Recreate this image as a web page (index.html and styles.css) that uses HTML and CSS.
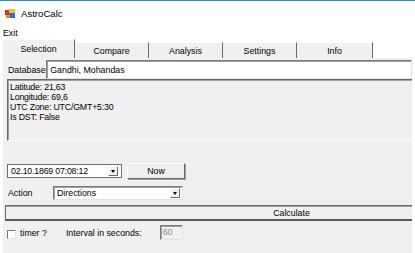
FILE: index.html
```html
<!DOCTYPE html>
<html lang="en">
<head>
    <meta charset="UTF-8">
    <title>AstroCalc</title>
    <link rel="stylesheet" href="styles.css">
</head>
<body>
    <div class="window">
        <div class="titlebar">
            <svg class="app-icon" width="11" height="10" viewBox="0 0 11 10">
                <rect x="0" y="1" width="6" height="5" fill="#d8322b"/>
                <rect x="4" y="0" width="6" height="5" fill="#f2c12e"/>
                <rect x="4" y="4" width="6" height="5" fill="#2f6fd0"/>
                <rect x="1" y="6" width="4" height="3" fill="#e58a2c"/>
            </svg>
            <span class="title">AstroCalc</span>
        </div>

        <div class="menubar">
            <span class="menu-item">Exit</span>
        </div>

        <div class="tabs">
            <div class="tab active">Selection</div>
            <div class="tab">Compare</div>
            <div class="tab">Analysis</div>
            <div class="tab">Settings</div>
            <div class="tab">Info</div>
        </div>

        <div class="tab-page">
            <div class="row db-row">
                <label class="label">Database</label>
                <div class="textbox db-box">Gandhi, Mohandas</div>
            </div>

            <div class="info-box">
                <div>Latitude: 21,63</div>
                <div>Longitude: 69,6</div>
                <div>UTC Zone: UTC/GMT+5:30</div>
                <div>Is DST: False</div>
            </div>

            <div class="row date-row">
                <div class="textbox date-box">
                    <span class="date-text">02.10.1869 07:08:12</span>
                    <span class="drop-btn"></span>
                </div>
                <button class="btn now-btn">Now</button>
            </div>

            <div class="row action-row">
                <label class="label">Action</label>
                <div class="textbox combo-box">
                    <span>Directions</span>
                    <span class="drop-btn"></span>
                </div>
            </div>

            <button class="btn calc-btn">Calculate</button>

            <div class="row timer-row">
                <span class="checkbox"></span>
                <span class="timer-label">timer ?</span>
                <span class="interval-label">Interval in seconds:</span>
                <div class="textbox interval-box">60</div>
            </div>
        </div>
    </div>
</body>
</html>
```

FILE: styles.css
```css
body {
    margin: 0;
    padding: 0;
    background-color: #ffffff;
    font-family: "Liberation Sans", Arial, sans-serif;
    font-size: 8.8px;
    color: #000000;
    overflow: hidden;
}

.window {
    width: 415px;
    height: 253px;
    border-top: 1px solid #2b88d8;
    box-sizing: border-box;
    overflow: hidden;
    position: relative;
}

.titlebar {
    height: 23px;
    display: flex;
    align-items: center;
    padding-left: 5px;
    gap: 5px;
}

.app-icon {
    margin-top: 2px;
}

.title {
    font-size: 9.6px;
    margin-top: 1px;
}

.menubar {
    height: 15px;
    display: flex;
    align-items: center;
    padding-left: 3px;
    padding-top: 2px;
    box-sizing: border-box;
}

.tabs {
    display: flex;
    align-items: flex-end;
    height: 19px;
    padding-left: 4px;
    background-color: #ffffff;
}

.tab {
    height: 16px;
    line-height: 16px;
    text-align: center;
    width: 74px;
    background-color: #f0f0f0;
    border-right: 1px solid #6a6a6a;
    border-top: 1px solid #ffffff;
    box-sizing: border-box;
}

.tab.active {
    height: 19px;
    line-height: 18px;
    width: 72px;
    margin-left: -1px;
}

.tab:nth-child(5) {
    width: 76px;
}

.tab-page {
    margin-left: 3px;
    width: 410px;
    height: 196px;
    background-color: #f0f0f0;
    border-right: 1px solid #fcfcfc;
    border-bottom: 1px solid #fcfcfc;
    box-sizing: border-box;
    overflow: hidden;
    padding-top: 2px;
}

.row {
    display: flex;
    align-items: center;
}

.label {
    width: 49px;
    padding-left: 5px;
    box-sizing: border-box;
}

.textbox {
    background-color: #ffffff;
    border-style: solid;
    border-width: 1px;
    border-color: #7a7a7a #e3e3e3 #e3e3e3 #7a7a7a;
    box-shadow: inset 1px 1px 0 #a0a0a0;
    box-sizing: border-box;
    display: flex;
    align-items: center;
    padding-left: 3px;
    white-space: nowrap;
}

.db-row {
    height: 19px;
}

.db-box {
    width: 420px;
    height: 19px;
}

.info-box {
    margin-left: 4px;
    width: 440px;
    height: 62px;
    padding: 2px 0 0 2px;
    box-sizing: border-box;
    line-height: 10px;
    letter-spacing: -0.2px;
    border-left: 1px solid #6a6a6a;
    border-top: 1px solid #6a6a6a;
    border-bottom: 1px solid #fcfcfc;
    box-shadow: inset 1px 1px 0 #a0a0a0;
}

.date-row {
    margin-top: 22px;
    height: 16px;
}

.date-box {
    margin-left: 4px;
    width: 115px;
    height: 14px;
    justify-content: space-between;
    padding-right: 3px;
    border-color: #6e6e6e;
    box-shadow: none;
}

.date-text {
    letter-spacing: -0.2px;
}

.drop-btn {
    width: 10px;
    height: 10px;
    box-sizing: border-box;
    background-color: #f0f0f0;
    border: 1px solid;
    border-color: #ffffff #6a6a6a #6a6a6a #ffffff;
    position: relative;
}

.drop-btn::after {
    content: "";
    position: absolute;
    left: 2px;
    top: 3px;
    border-left: 2px solid transparent;
    border-right: 2px solid transparent;
    border-top: 3px solid #000000;
}

.btn {
    font-family: inherit;
    font-size: inherit;
    background-color: #f0f0f0;
    color: #000000;
    padding: 0;
    box-sizing: border-box;
    cursor: pointer;
}

.now-btn {
    margin-left: 5px;
    width: 58px;
    height: 16px;
    border: 1px solid;
    border-color: #ffffff #6a6a6a #6a6a6a #ffffff;
    box-shadow: 1px 1px 0 #a0a0a0;
    background-color: #efefef;
}

.action-row {
    margin-top: 6px;
    height: 15px;
}

.label + .combo-box {
    margin-left: 1px;
}

.combo-box {
    width: 130px;
    height: 14px;
    justify-content: space-between;
    padding-right: 2px;
}

.calc-btn {
    display: block;
    margin-top: 5px;
    margin-left: 2px;
    width: 572px;
    height: 16px;
    border: none;
    border-left: 1px solid #6a6a6a;
    border-top: 1px solid #6a6a6a;
    border-bottom: 2px solid #5a5a5a;
    box-shadow: inset 0 1px 0 #a0a0a0;
}

.timer-row {
    margin-top: 3px;
    height: 16px;
}

.checkbox {
    margin-left: 4px;
    width: 9px;
    height: 9px;
    background-color: #ffffff;
    border: 1px solid;
    border-color: #7a7a7a #e3e3e3 #e3e3e3 #7a7a7a;
    box-sizing: border-box;
    margin-top: 4px;
}

.timer-label {
    margin-left: 4px;
    margin-top: 2px;
}

.interval-label {
    margin-left: 19px;
    margin-top: 1px;
}

.interval-box {
    margin-left: 18px;
    width: 23px;
    height: 15px;
    background-color: #f0f0f0;
    color: #8a8a8a;
    padding-left: 2px;
}
```
